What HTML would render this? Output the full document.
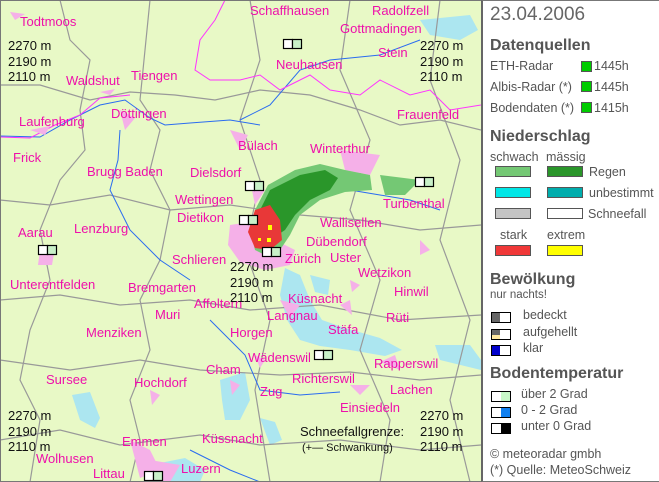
<!DOCTYPE html>
<html><head><meta charset="utf-8"><style>
body{margin:0;width:659px;height:482px;overflow:hidden;background:#fff;font-family:"Liberation Sans",sans-serif}
#map{position:absolute;left:0;top:0;width:481px;height:482px}
#leg{position:absolute;left:481px;top:0;width:176px;height:480px;border:1px solid #777;border-left:2px solid #666;background:#fff;color:#555}
.t{position:absolute;font-size:12.5px;white-space:nowrap}
.h{position:absolute;font-size:16px;font-weight:bold;color:#555;left:7px}
.sw{position:absolute;width:34px;height:9px;border:1px solid #555}
.sq{position:absolute;width:9px;height:9px;border:1px solid #555;background:#00cc00}
.ic{position:absolute;width:18px;height:9px;border:1px solid #000;background:#fff}
.ic i{position:absolute;top:0;width:8px;height:9px}
</style></head><body>
<svg id="map" width="481" height="482" viewBox="0 0 481 482" font-family="Liberation Sans, sans-serif" font-size="13">
<rect x="0" y="0" width="481" height="482" fill="#e8f9c6"/>
<g fill="#ace6f0">
<path d="M285 268 L300 275 L310 300 L322 320 L345 328 L380 338 L402 350 L385 356 L350 350 L320 346 L300 340 L287 320 L280 295Z"/>
<path d="M220 380 L245 372 L250 400 L240 420 L225 420 L222 400Z"/>
<path d="M72 395 L90 392 L100 418 L95 428 L80 420Z"/>
<path d="M420 20 L470 15 L478 30 L460 40 L430 35Z"/>
<path d="M310 275 L330 280 L328 295 L315 292Z"/>
<path d="M260 418 L275 422 L282 440 L270 445Z"/>
<path d="M150 465 L185 458 L205 470 L200 482 L150 482Z"/>
<path d="M435 345 L470 345 L481 360 L481 370 L440 360Z"/>
</g>
<g fill="none" stroke="#999" stroke-width="1.2">
<path d="M0 85 L40 85 L90 100 L130 92 L175 95 L215 100 L260 90 L310 95 L360 110 L400 125 L440 120 L481 130"/>
<path d="M60 0 L70 40 L90 60 L80 110 L85 150 L60 180 L40 230 L50 280 L30 330 L20 380 L40 420 L30 482"/>
<path d="M150 0 L145 50 L140 100 L160 130 L150 170 L170 210 L160 260 L140 300 L150 350 L130 400 L140 440 L130 482"/>
<path d="M0 200 L50 205 L110 195 L170 210 L230 205 L300 215 L360 220 L420 230 L481 225"/>
<path d="M0 300 L60 295 L120 305 L190 300 L250 310 L320 305 L400 320 L481 315"/>
<path d="M0 360 L70 370 L140 360 L200 370 L280 375 L350 372 L420 380 L481 375"/>
<path d="M0 440 L60 430 L120 445 L200 435 L260 445 L340 440 L420 450 L481 445"/>
<path d="M250 0 L260 60 L240 120 L260 180 L245 250 L270 320 L255 390 L270 482"/>
<path d="M350 0 L340 70 L370 140 L350 210 L380 280 L360 350 L390 420 L380 482"/>
<path d="M440 0 L430 80 L460 160 L440 240 L470 320 L450 400 L470 482"/>
</g>
<g fill="none" stroke="#2a6cf0" stroke-width="1">
<path d="M0 136 L40 137 L70 120 L100 105 L125 100 L150 118 L165 125 L190 123 L230 120 L260 125"/>
<path d="M120 130 L118 160 L110 190 L130 230 L160 260 L190 280"/>
<path d="M322 178 L350 190 L380 195 L410 200 L440 210"/>
<path d="M240 120 L270 105 L300 70 L330 60 L380 55 L420 40"/>
<path d="M210 320 L245 355 L260 390 L300 395 L340 392"/>
<path d="M190 450 L230 470 L260 482"/>
</g>
<g fill="none" stroke="#ff33ff" stroke-width="1">
<path d="M225 0 L215 20 L200 40 L195 70 L210 80 L240 80 L260 75 L280 90 L310 75 L330 90 L360 95 L380 80 L410 95 L430 90 L450 110 L481 105"/>
<path d="M0 137 L30 138 L55 125 L80 115 L100 98 L130 95"/>
</g>
<g fill="#f5b0e8">
<path d="M10 12 L25 14 L15 20Z"/><path d="M100 92 L115 89 L110 95Z"/><path d="M30 130 L50 126 L45 135Z"/>
<path d="M120 110 L135 118 L125 130Z"/><path d="M230 130 L248 135 L240 150 Z"/><path d="M340 150 L380 155 L370 175 L345 170Z"/>
<path d="M250 180 L265 190 L255 205Z"/><path d="M230 225 L250 222 L275 240 L295 250 L290 265 L265 270 L240 262 L228 245Z"/>
<path d="M40 250 L55 248 L52 265 L38 265Z"/><path d="M420 240 L430 250 L420 255Z"/><path d="M350 280 L360 285 L352 292Z"/>
<path d="M255 355 L265 360 L260 368Z"/><path d="M230 380 L240 385 L232 395Z"/><path d="M340 305 L350 300 L352 315Z"/>
<path d="M150 390 L160 395 L152 405Z"/><path d="M130 440 L150 450 L160 470 L140 478Z"/><path d="M350 385 L370 385 L360 395Z"/>
<path d="M380 362 L395 355 L400 370Z"/><path d="M150 460 L180 465 L170 482 L150 482Z"/><path d="M280 300 L300 305 L290 318Z"/>
</g>
<g>
<path d="M268 185 L295 170 L320 164 L345 170 L370 175 L372 190 L345 192 L320 200 L300 215 L290 235 L280 250 L265 255 L255 250 L250 230 L255 210Z" fill="#74c874"/>
<path d="M270 190 L300 175 L325 170 L338 178 L330 190 L310 200 L295 215 L285 230 L270 240 L258 230 L260 210Z" fill="#2a962a"/>
<path d="M380 175 L420 180 L405 195 L385 195Z" fill="#74c874"/>
<path d="M255 210 L270 205 L280 220 L282 240 L270 250 L255 248 L248 232Z" fill="#e83838"/>
<rect x="268" y="225" width="4" height="5" fill="#ff0"/><rect x="267" y="238" width="4" height="4" fill="#ff0"/><rect x="258" y="238" width="3" height="3" fill="#ff0"/>
</g>
<g fill="#ee10aa">
<text x="20" y="26">Todtmoos</text><text x="250" y="15">Schaffhausen</text><text x="372" y="15">Radolfzell</text>
<text x="340" y="33">Gottmadingen</text><text x="378" y="57">Stein</text><text x="276" y="69">Neuhausen</text>
<text x="66" y="85">Waldshut</text><text x="131" y="80">Tiengen</text><text x="111" y="118">Döttingen</text>
<text x="19" y="126">Laufenburg</text><text x="397" y="119">Frauenfeld</text><text x="13" y="162">Frick</text>
<text x="238" y="150">Bülach</text><text x="310" y="153">Winterthur</text><text x="87" y="176">Brugg Baden</text>
<text x="190" y="177">Dielsdorf</text><text x="175" y="204">Wettingen</text><text x="177" y="222">Dietikon</text>
<text x="383" y="208">Turbenthal</text><text x="320" y="227">Wallisellen</text><text x="18" y="237">Aarau</text>
<text x="74" y="233">Lenzburg</text><text x="306" y="246">Dübendorf</text><text x="172" y="264">Schlieren</text>
<text x="285" y="263">Zürich</text><text x="330" y="262">Uster</text><text x="358" y="277">Wetzikon</text>
<text x="10" y="289">Unterentfelden</text><text x="128" y="292">Bremgarten</text><text x="394" y="296">Hinwil</text>
<text x="194" y="308">Affoltern</text><text x="288" y="303">Küsnacht</text><text x="155" y="319">Muri</text>
<text x="267" y="320">Langnau</text><text x="386" y="322">Rüti</text><text x="86" y="337">Menziken</text>
<text x="230" y="337">Horgen</text><text x="328" y="334">Stäfa</text><text x="248" y="362">Wädenswil</text>
<text x="374" y="368">Rapperswil</text><text x="206" y="374">Cham</text><text x="292" y="383">Richterswil</text>
<text x="46" y="384">Sursee</text><text x="134" y="387">Hochdorf</text><text x="260" y="396">Zug</text>
<text x="390" y="394">Lachen</text><text x="340" y="412">Einsiedeln</text><text x="202" y="443">Küssnacht</text>
<text x="122" y="446">Emmen</text><text x="36" y="463">Wolhusen</text><text x="93" y="478">Littau</text><text x="181" y="473">Luzern</text>
</g>
<g fill="#111" font-size="13">
<text x="8" y="50">2270  m</text><text x="8" y="66">2190  m</text><text x="8" y="81">2110  m</text>
<text x="420" y="50">2270  m</text><text x="420" y="66">2190  m</text><text x="420" y="81">2110  m</text>
<text x="230" y="271">2270  m</text><text x="230" y="287">2190  m</text><text x="230" y="302">2110  m</text>
<text x="8" y="420">2270  m</text><text x="8" y="436">2190  m</text><text x="8" y="451">2110  m</text>
<text x="420" y="420">2270  m</text><text x="420" y="436">2190  m</text><text x="420" y="451">2110  m</text>
<text x="300" y="436">Schneefallgrenze:</text><text x="302" y="451" font-size="11">(+— Schwankung)</text>
</g>
<g stroke="#000" stroke-width="1.2">
<rect x="283.5" y="39.5" width="9" height="9" fill="#fff"/><rect x="292.5" y="39.5" width="9" height="9" fill="#c8f0c8"/>
<rect x="245.5" y="181.5" width="9" height="9" fill="#fff"/><rect x="254.5" y="181.5" width="9" height="9" fill="#c8f0c8"/>
<rect x="415.5" y="177.5" width="9" height="9" fill="#fff"/><rect x="424.5" y="177.5" width="9" height="9" fill="#c8f0c8"/>
<rect x="239.5" y="215.5" width="9" height="9" fill="#fff"/><rect x="248.5" y="215.5" width="9" height="9" fill="#c8f0c8"/>
<rect x="38.5" y="245.5" width="9" height="9" fill="#fff"/><rect x="47.5" y="245.5" width="9" height="9" fill="#c8f0c8"/>
<rect x="262.5" y="247.5" width="9" height="9" fill="#fff"/><rect x="271.5" y="247.5" width="9" height="9" fill="#c8f0c8"/>
<rect x="314.5" y="350.5" width="9" height="9" fill="#fff"/><rect x="323.5" y="350.5" width="9" height="9" fill="#c8f0c8"/>
<rect x="144.5" y="471.5" width="9" height="9" fill="#fff"/><rect x="153.5" y="471.5" width="9" height="9" fill="#c8f0c8"/>
</g>
<rect x="0.5" y="0.5" width="481" height="481" fill="none" stroke="#777"/>
</svg>
<div id="leg">
<div class="t" style="left:7px;top:3px;font-size:19px;color:#666">23.04.2006</div>
<div class="h" style="top:36px">Datenquellen</div>
<div class="t" style="left:7px;top:58px">ETH-Radar</div><div class="sq" style="left:98px;top:60px"></div><div class="t" style="left:111px;top:58px">1445h</div>
<div class="t" style="left:7px;top:79px">Albis-Radar (*)</div><div class="sq" style="left:98px;top:80px"></div><div class="t" style="left:111px;top:79px">1445h</div>
<div class="t" style="left:7px;top:100px">Bodendaten (*)</div><div class="sq" style="left:98px;top:101px"></div><div class="t" style="left:111px;top:100px">1415h</div>
<div class="h" style="top:127px">Niederschlag</div>
<div class="t" style="left:7px;top:149px">schwach</div><div class="t" style="left:63px;top:149px">mässig</div>
<div class="sw" style="left:12px;top:165px;background:#74c874"></div><div class="sw" style="left:64px;top:165px;background:#2a962a"></div><div class="t" style="left:106px;top:164px">Regen</div>
<div class="sw" style="left:12px;top:186px;background:#00e6e6"></div><div class="sw" style="left:64px;top:186px;background:#00adad"></div><div class="t" style="left:106px;top:185px">unbestimmt</div>
<div class="sw" style="left:12px;top:207px;background:#c4c4c4"></div><div class="sw" style="left:64px;top:207px;background:#fff"></div><div class="t" style="left:105px;top:206px">Schneefall</div>
<div class="t" style="left:17px;top:227px">stark</div><div class="t" style="left:64px;top:227px">extrem</div>
<div class="sw" style="left:12px;top:244px;background:#f03838"></div><div class="sw" style="left:64px;top:244px;background:#ffff00"></div>
<div class="h" style="top:270px">Bewölkung</div>
<div class="t" style="left:7px;top:288px;font-size:11.5px">nur nachts!</div>
<div class="ic" style="left:8px;top:311px"><i style="left:0;background:#666"></i></div><div class="t" style="left:40px;top:307px">bedeckt</div>
<div class="ic" style="left:8px;top:328px"><i style="left:0;background:linear-gradient(#666 55%,#ffe8a0 55%)"></i></div><div class="t" style="left:40px;top:324px">aufgehellt</div>
<div class="ic" style="left:8px;top:344px"><i style="left:0;background:#00c;"></i></div><div class="t" style="left:40px;top:340px">klar</div>
<div class="h" style="top:364px">Bodentemperatur</div>
<div class="ic" style="left:8px;top:390px"><i style="left:9px;background:#c8f8c8;width:9px"></i></div><div class="t" style="left:38px;top:386px">über 2 Grad</div>
<div class="ic" style="left:8px;top:406px"><i style="left:9px;background:#1080f0;width:9px"></i></div><div class="t" style="left:38px;top:402px">0 - 2 Grad</div>
<div class="ic" style="left:8px;top:422px"><i style="left:9px;background:#000;width:9px"></i></div><div class="t" style="left:38px;top:418px">unter 0 Grad</div>
<div class="t" style="left:7px;top:446px">© meteoradar gmbh</div>
<div class="t" style="left:7px;top:462px">(*) Quelle: MeteoSchweiz</div>
</div>
</body></html>
